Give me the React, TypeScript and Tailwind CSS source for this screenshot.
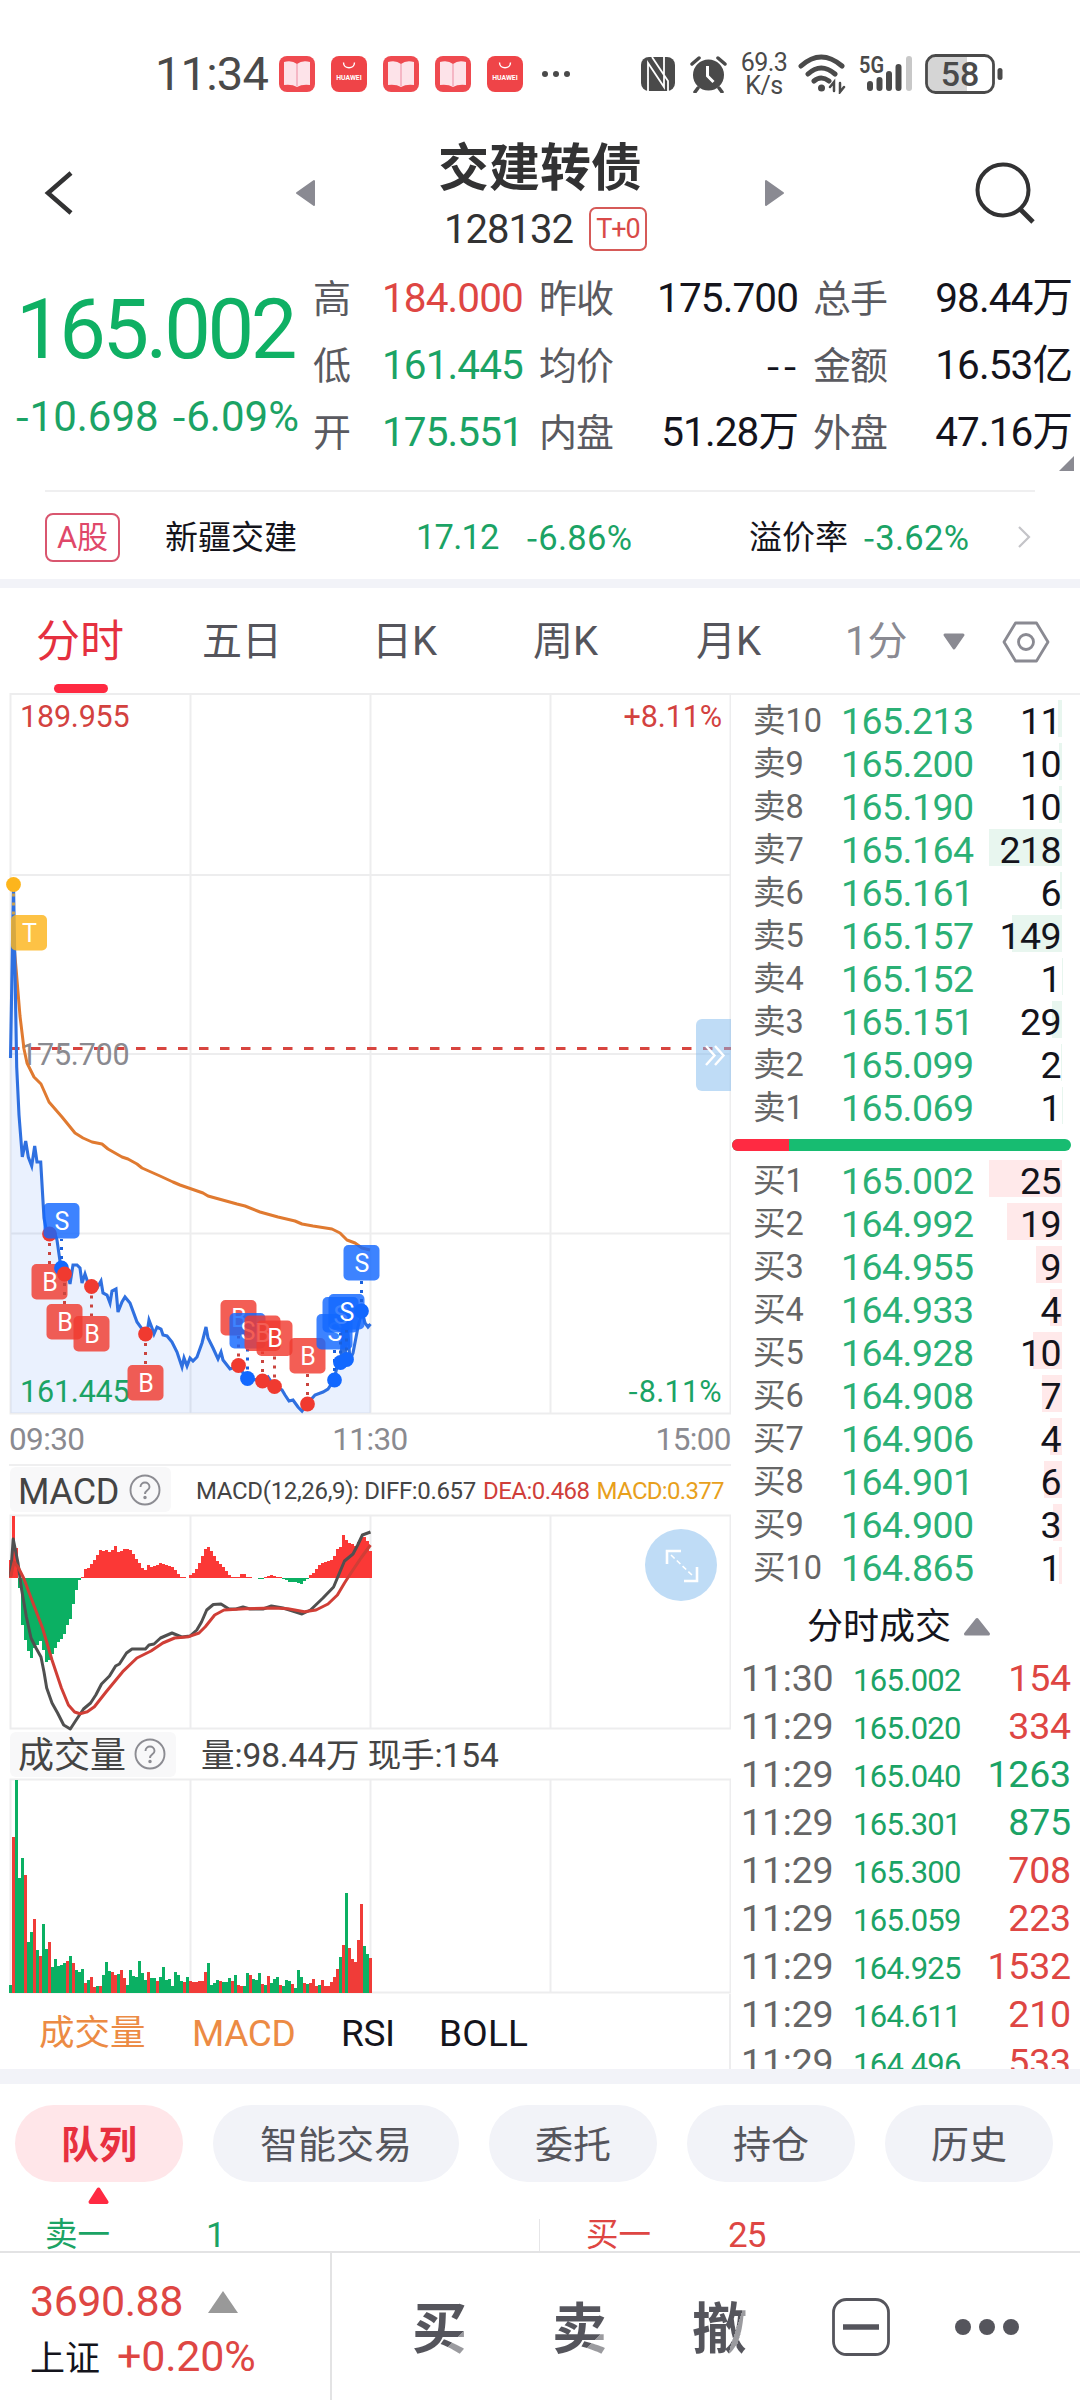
import React from 'react';

const asks = [
  ['卖10', '165.213', 11],
  ['卖9', '165.200', 10],
  ['卖8', '165.190', 10],
  ['卖7', '165.164', 218],
  ['卖6', '165.161', 6],
  ['卖5', '165.157', 149],
  ['卖4', '165.152', 1],
  ['卖3', '165.151', 29],
  ['卖2', '165.099', 2],
  ['卖1', '165.069', 1],
] as [string, string, number][];

const bids = [
  ['买1', '165.002', 25],
  ['买2', '164.992', 19],
  ['买3', '164.955', 9],
  ['买4', '164.933', 4],
  ['买5', '164.928', 10],
  ['买6', '164.908', 7],
  ['买7', '164.906', 4],
  ['买8', '164.901', 6],
  ['买9', '164.900', 3],
  ['买10', '164.865', 1],
] as [string, string, number][];

const trades = [
  ['11:30', '165.002', '154', 'r'],
  ['11:29', '165.020', '334', 'r'],
  ['11:29', '165.040', '1263', 'g'],
  ['11:29', '165.301', '875', 'g'],
  ['11:29', '165.300', '708', 'r'],
  ['11:29', '165.059', '223', 'r'],
  ['11:29', '164.925', '1532', 'r'],
  ['11:29', '164.611', '210', 'r'],
  ['11:29', '164.496', '533', 'r'],
];

// intraday price, one "x,y" pair per sample
const priceLine =
  '10.5,1058 13.5,884 16.7,1067 19,1115 22.3,1157 25.7,1141 28.3,1157 31.7,1166 34.7,1146 37,1162 40.7,1162 44,1218 47,1234 55,1234 57,1240 61,1268 65,1273 68,1275 70,1284 73,1265 77,1265 80,1268 82,1283 85,1274 88,1283 97,1288 101,1281 103,1293 107,1295 110,1303 112,1291 116,1289 118,1312 122,1302 125,1297 130,1303 137,1322 142,1329 147,1333 149,1320 152,1328 154,1334 157,1327 161,1329 163,1335 167,1336 172,1342 177,1352 182,1367 184,1358 187,1366 190,1358 193,1361 197,1357 202,1343 206,1327 208,1338 213,1348 218,1359 221,1352 223,1360 230,1369 238,1366 247,1378 262,1381 268,1377 274,1386 282,1390 285,1395 289,1401 293,1400 298,1407 302,1411 307,1404 315,1395 323,1392 328,1389 334,1380 337,1367 341,1362 343,1320 345,1360 347,1320 350,1360 353,1353 358,1327 362,1311 365,1323 368,1327 370.5,1324';

const avgLine =
  '13.5,940 16,968 20,1016 24,1049 27,1063 34,1077 41,1084 49,1102 62,1117 75,1133 83,1138 92,1142 102,1144 108,1149 122,1157 128,1159 137,1164 142,1168 160,1176 173,1182 180,1185 203,1193 208,1196 237,1204 245,1206 260,1212 278,1217 295,1221 302,1224 313,1226 332,1229 340,1233 347,1240 355,1243 362,1248 370,1250';

const diffLine =
  '10.5,1577 13.2,1539 18,1563 21.7,1590 26.4,1617 31,1638 36,1648 41,1657 44,1672 46.7,1688 52,1703 57.6,1713 63.7,1725 70.3,1729 75.5,1721 83.5,1709 90.6,1703 95.8,1695 101.5,1684 109.5,1676 115.6,1666 119.4,1664 126.5,1653 132,1649 145.4,1649 149,1645 154,1644 160.5,1638 172,1633 181.7,1637 190,1636 196.8,1630 201.5,1622 206.7,1610 213.3,1604.5 221,1604 229,1609 236,1609 243,1607 250,1609 263,1609 271.4,1606 283,1608 292.6,1611 302,1614 310.5,1610 323,1598 333.6,1587 340.7,1570 344.5,1561 353,1554 357.7,1545 362.4,1535 370.5,1532';

const deaLine =
  '10.5,1577 14,1562 18,1567 23.6,1578 30.7,1597 42.5,1628 52,1660 61.4,1688 68.4,1705 74.6,1712 80,1713.7 87.3,1711.7 94.4,1706.7 106,1692 122.7,1671.7 136.9,1658 151,1651 162.8,1643 174.6,1638 188.8,1636.7 199,1633 205.3,1626.7 214.7,1615 224,1610 245.4,1608.7 273.7,1608 287.9,1608.7 304.4,1611.7 316,1610 328,1604 337.4,1595 344.5,1583 351.6,1572 361,1558 370.5,1545';

const macd = [
  18, 62, 30, -10, -47, -62, -73, -80, -70, -67, -63, -72, -84, -82, -76, -70, -64, -61, -56, -47, -41, -26, -12, -2, 1, 9,
  10, 14, 18, 23, 28, 27, 28, 26, 28, 32, 26, 27, 29, 29, 28, 24, 19, 15, 10, 8, 13, 11, 12, 13, 15, 14, 13, 12, 11, 8, 4,
  1, 1, 0, 3, 5, 9, 15, 22, 29, 31, 27, 22, 17, 14, 11, 7, 3, 1, 1, 1, 4, 4, 1, 1, 0, 0, -1, -1, 1, 2, 3, 2, 1, 1, -1, -2,
  -4, -4, -4, -5, -6, -3, -1, 3, 5, 9, 13, 15, 16, 17, 18, 22, 29, 31, 43, 38, 35, 34, 32, 36, 40, 41, 37, 27,
];

const volume = [
  8, 156, 213, 115, 135, 118, 51, 61, 74, 43, 37, 69, 44, 51, 26, 34, 27, 28, 30, 32, 37, 30, 23, 21, 24, 10, 13, 16, 6, 7,
  7, 18, 31, 22, 21, 18, 19, 23, 15, 8, 23, 17, 16, 32, 20, 13, 21, 15, 15, 12, 16, 26, 13, 14, 7, 21, 18, 12, 11, 16, 12,
  11, 11, 12, 12, 21, 30, 8, 10, 13, 12, 11, 11, 15, 12, 18, 8, 7, 7, 20, 18, 14, 13, 20, 9, 8, 17, 10, 14, 16, 8, 7, 13,
  12, 9, 5, 23, 16, 10, 9, 10, 14, 7, 8, 13, 7, 7, 11, 16, 24, 36, 48, 100, 45, 34, 31, 53, 89, 47, 39, 35,
];

const upMinutes = new Set([
  1, 5, 8, 10, 13, 19, 21, 25, 27, 28, 30, 34, 35, 37, 38, 46, 49, 58, 60, 61, 62, 63, 64, 65, 70, 74, 76, 77, 80, 84, 86,
  90, 94, 98, 100, 101, 102, 104, 105, 106, 107, 108, 109, 111, 113, 114, 115, 116, 117, 120,
]);

// [side, x, dot y, label top]
const markers: [string, number, number, number][] = [
  ['B', 49.5, 1234, 1264],
  ['S', 61.5, 1268, 1203],
  ['B', 64.5, 1274, 1304],
  ['B', 91.5, 1286.5, 1316],
  ['B', 145.5, 1334, 1365],
  ['B', 238.5, 1365.5, 1300],
  ['S', 247.5, 1378.5, 1313],
  ['B', 262.5, 1381, 1315.5],
  ['B', 274.5, 1386.5, 1320.5],
  ['B', 307.5, 1404, 1338],
  ['S', 334.5, 1380, 1314],
  ['S', 340.5, 1362.5, 1297],
  ['S', 346.5, 1359.5, 1294],
  ['S', 361.5, 1311, 1245],
];

const markerFill: Record<string, string> = { B: '#f03a30', S: '#1268ff', T: '#fdb51c' };

const Marker = ({ side, x, dot, top, labelX }: { side: string; x: number; dot: number; top: number; labelX?: number }) => {
  const lx = labelX ?? x - 18;
  const fill = markerFill[side];
  return (
    <g>
      <line x1={x} x2={x} y1={dot} y2={top > dot ? top : top + 36} stroke={side === 'B' ? '#c9443e' : side === 'S' ? '#1a60dc' : '#c9a050'} strokeWidth="3" strokeDasharray="3 6" />
      <circle cx={x} cy={dot} r="7.4" fill={fill} />
      <rect x={lx} y={top} width="36" height="35.5" rx="5" fill={fill} fillOpacity="0.82" />
      <text x={lx + 18.5} y={top + 26.5} textAnchor="middle" fontSize="25" fill="#fff">{side}</text>
    </g>
  );
};

const Grid = ({ top, bottom }: { top: number; bottom: number }) => (
  <g stroke="#ededee" strokeWidth="2" fill="none">
    <rect x="10.5" y={top} width="720" height={bottom - top} />
    {[190.5, 370.5, 550.5].map((x) => <line key={x} x1={x} x2={x} y1={top} y2={bottom} />)}
  </g>
);

const PriceChart = () => (
  <svg className="block" width="731" height="722" viewBox="0 693 731 722">
    <Grid top={694} bottom={1413.5} />
    <g stroke="#ededee" strokeWidth="2">
      <line x1="10" x2="731" y1="875" y2="875" />
      <line x1="10" x2="731" y1="1054" y2="1054" />
      <line x1="10" x2="731" y1="1233.5" y2="1233.5" />
    </g>
    <polygon points={`10.5,1413 ${priceLine} 370.5,1413`} fill="#1668f0" fillOpacity="0.09" />
    <line x1="10" x2="731" y1="1048.5" y2="1048.5" stroke="#d8453f" strokeWidth="3.2" strokeDasharray="9.5 11.5" />
    <g fontSize="30.5">
      <text x="20" y="727" fill="#d3423f" letterSpacing="-0.2">189.955</text>
      <text x="722" y="727" fill="#d3423f" textAnchor="end" letterSpacing="-0.1">+8.11%</text>
      <text x="20" y="1065" fill="#8a8a90" letterSpacing="-0.2">175.700</text>
      <text x="20" y="1402" fill="#1ba365" letterSpacing="-0.2">161.445</text>
      <text x="722" y="1402" fill="#1ba365" textAnchor="end" letterSpacing="0.3">
        <tspan fontFamily="Noto Sans CJK SC">-</tspan>8.11%
      </text>
    </g>
    <polyline points={avgLine} fill="none" stroke="#e07a30" strokeWidth="3" strokeLinejoin="round" />
    <polyline points={priceLine} fill="none" stroke="#2f70e0" strokeWidth="3.1" />
    <Marker side="T" x={13.5} dot={884.5} top={915} labelX={11} />
    {markers.map(([side, x, dot, top], i) => <Marker key={i} side={side} x={x} dot={dot} top={top} />)}
    <path d="M731 1019H702a6 6 0 0 0-6 6v60a6 6 0 0 0 6 6h29z" fill="#7fb9ed" fillOpacity="0.5" />
    <path d="M706 1046l8.500 9.500-8.500 9.500M715 1046l8.500 9.500-8.500 9.500" fill="none" stroke="#fff" strokeWidth="2.4" />
  </svg>
);

const MacdChart = () => (
  <svg className="block" width="731" height="218" viewBox="0 1513 731 218">
    <Grid top={1515.5} bottom={1728.5} />
    {macd.map((v, i) => (
      <rect key={i} x={9 + i * 3} width="3.1" y={v > 0 ? 1578 - v : 1578} height={Math.abs(v)} fill={v > 0 ? '#fb3836' : '#0bb063'} shapeRendering="crispEdges" />
    ))}
    <polyline points={diffLine} fill="none" stroke="#505050" strokeWidth="3" strokeLinejoin="round" />
    <polyline points={deaLine} fill="none" stroke="#d03e36" strokeWidth="3" strokeLinejoin="round" />
    <circle cx="681" cy="1565" r="36" fill="#bfdcf6" />
    <path d="M667 1564v-13h14M684 1581h13v-14" fill="none" stroke="#fff" strokeWidth="2.6" />
    <path d="M671 1555l23 22" stroke="#fff" strokeWidth="1.6" strokeDasharray="5 3" />
  </svg>
);

const VolumeChart = () => (
  <svg className="block" width="731" height="217" viewBox="0 1777 731 217">
    <Grid top={1779.5} bottom={1992.5} />
    {volume.map((v, i) => (
      <rect key={i} x={9 + i * 3} width="3.05" y={1993 - v} height={v} fill={upMinutes.has(i) ? '#f03c38' : '#0bb063'} shapeRendering="crispEdges" />
    ))}
  </svg>
);

const Help = () => (
  <svg width="32" height="32" viewBox="0 0 32 32" fill="none" stroke="#8c8c92" strokeWidth="1.9">
    <circle cx="16" cy="16" r="14.500" />
    <path d="M11.500 13c0-6 9-6 9 0 0 3.500-4.500 3.200-4.500 7" />
    <circle cx="16" cy="23.500" r="0.800" fill="#8c8c92" />
  </svg>
);

const BookIcon = () => (
  <svg width="36" height="36" viewBox="0 0 36 36">
    <rect width="36" height="36" rx="8" fill="#ef4a50" />
    <path d="M5 6q8-2 13 2 5-4 13-2v23q-8-1-13 2-5-3-13-2z" fill="#fde3e9" />
    <path d="M18 8v22" stroke="#f2a8b8" strokeWidth="1.5" />
  </svg>
);

const StoreIcon = () => (
  <svg width="36" height="36" viewBox="0 0 36 36">
    <rect width="36" height="36" rx="8" fill="#ef4448" />
    <path d="M12.500 6.500c0 7 11 7 11 0" fill="none" stroke="#fff" strokeWidth="1.400" />
    <text x="18" y="23.500" textAnchor="middle" fontSize="6.800" fontWeight="700" fill="#fff">HUAWEI</text>
  </svg>
);

const StatusBar = () => (
  <div className="flex h-[110px] items-center pt-[37px] text-[#4a4a4a]">
    <div className="ml-[155px] w-[124px] text-[47px] tracking-[-0.8px]">11:34</div>
    <div className="flex gap-[16px]">
      <BookIcon />
      <StoreIcon />
      <BookIcon />
      <BookIcon />
      <StoreIcon />
    </div>
    <div className="ml-[19px] flex w-[99px] gap-[5px]">
      <i className="size-[6px] rounded-full bg-[#4a4a4a]" />
      <i className="size-[6px] rounded-full bg-[#4a4a4a]" />
      <i className="size-[6px] rounded-full bg-[#4a4a4a]" />
    </div>
    <svg width="34" height="36" viewBox="0 0 34 36">
      <rect y="1" width="34" height="34" rx="8" fill="#4a4a4a" />
      <path d="M7 35V7l16 24V1M11 1l16 24v10M7 8v27" fill="none" stroke="#fff" strokeWidth="1.800" />
    </svg>
    <svg className="ml-[15px]" width="37" height="38" viewBox="0 0 37 38">
      <circle cx="18.500" cy="20" r="15.500" fill="#4a4a4a" />
      <path d="M2 9l7-6M35 9l-7-6M8 33l-3 4M29 33l3 4" stroke="#4a4a4a" strokeWidth="3.500" strokeLinecap="round" />
      <path d="M17.500 11v10l6 6" fill="none" stroke="#fff" strokeWidth="3" />
    </svg>
    <div className="ml-[13px] w-[48px] text-center text-[25px] leading-[23px] tracking-[-0.5px]">
      69.3
      <br />
      K/s
    </div>
    <svg className="ml-[10px]" width="49" height="40" viewBox="0 0 49 40" fill="none" stroke="#4a4a4a" strokeWidth="5" strokeLinecap="round">
      <path d="M3 12q20-18 41 0M10 20q13-12 27 0M16 27q7-6 15 0" />
      <circle cx="23.500" cy="34" r="3.500" fill="#4a4a4a" stroke="none" />
      <path d="M36 37v-9l-4 5M42 29v9l4-5" strokeWidth="2.500" />
    </svg>
    <svg className="ml-[12px] overflow-visible" width="56" height="40" viewBox="0 0 56 40">
      <text x="0" y="19" fontSize="24" fontWeight="600" textLength="25" lengthAdjust="spacingAndGlyphs" fill="#4a4a4a">5G</text>
      <g strokeWidth="6" strokeLinecap="round" stroke="#4a4a4a">
        <path d="M11 30v4M20.500 26v8M30 20v14M39.500 13v21" />
        <path d="M50 5v29" stroke="#c8c8c8" />
      </g>
    </svg>
    <svg className="ml-[10px]" width="80" height="40" viewBox="0 0 80 40">
      <path d="M10 3h32v34H10q-7 0-7-7V10q0-7 7-7z" fill="#d5d5d5" />
      <rect x="1.500" y="1.500" width="67" height="37" rx="9" fill="none" stroke="#4a4a4a" strokeWidth="2.800" />
      <rect x="72.500" y="14" width="5" height="12" rx="2.500" fill="#4a4a4a" />
      <text x="35" y="32" textAnchor="middle" fontSize="34" fontWeight="500" fill="#4a4a4a">58</text>
    </svg>
  </div>
);

const Header = () => (
  <div className="flex h-[146px] items-center text-[#323233]">
    <svg className="ml-[43px] mt-[20px]" width="32" height="48" viewBox="0 0 32 48">
      <path d="M28 4L5 24l23 20" fill="none" stroke="#323233" strokeWidth="4.500" />
    </svg>
    <svg className="ml-[219px] mt-[20px]" width="22" height="28" viewBox="0 0 22 28">
      <path d="M20 2v24L3 14z" fill="#8a8a92" stroke="#8a8a92" strokeWidth="2" strokeLinejoin="round" />
    </svg>
    <div className="flex w-[448px] flex-col items-center pt-[24px]">
      <div className="h-[68px] text-[51px] font-bold leading-[60px]">交建转债</div>
      <div className="flex h-[44px] items-center gap-[16px] pl-[11px]">
        <span className="pt-[2px] text-[40px] tracking-[-1px]">128132</span>
        <span className="flex h-[44px] w-[58px] items-center justify-center rounded-[7px] border-2 border-[#d65a58] text-[27px] tracking-[-1px] text-[#d94a48]">T+0</span>
      </div>
    </div>
    <svg className="mt-[20px]" width="22" height="28" viewBox="0 0 22 28">
      <path d="M2 2v24l17-12z" fill="#8a8a92" stroke="#8a8a92" strokeWidth="2" strokeLinejoin="round" />
    </svg>
    <svg className="ml-[188px] mt-[20px]" width="64" height="64" viewBox="0 0 64 64" fill="none" stroke="#323233" strokeWidth="4">
      <circle cx="29" cy="29" r="25.500" />
      <path d="M46 48l13 13" strokeWidth="4.800" />
    </svg>
  </div>
);

// the hyphen of the CJK face is wide enough to read as a minus sign
const Negative = ({ value }: { value: string }) => (
  <>
    <span className="font-['Noto_Sans_CJK_SC']">-</span>
    {value}
  </>
);

const stats = [
  ['高', '184.000', 'text-[#de4643]', '昨收', '175.700', '总手', '98.44万'],
  ['低', '161.445', 'text-[#1ba365]', '均价', '--', '金额', '16.53亿'],
  ['开', '175.551', 'text-[#1ba365]', '内盘', '51.28万', '外盘', '47.16万'],
];

const Quote = () => (
  <div className="relative flex h-[234px]">
    <div className="w-[313px] text-[#0fb064]">
      <div className="mt-[31px] h-[85px] pl-[16px] text-[83px] leading-[85px] tracking-[-3.4px]">165.002</div>
      <div className="mt-[20px] flex gap-[13px] whitespace-nowrap pl-[15px] text-[42px] leading-[42px] text-[#1ba365]">
        <span><Negative value="10.698" /></span>
        <span><Negative value="6.09%" /></span>
      </div>
    </div>
    <div className="flex-1 pt-[9px]">
      {stats.map(([l1, v1, tone, l2, v2, l3, v3]) => (
        <div key={l1} className="flex h-[67px] items-center text-[40.5px] tracking-[-0.9px]">
          <span className="w-[69px] text-[38px] text-[#5a5a60]">{l1}</span>
          <span className={`w-[157px] ${tone}`}>{v1}</span>
          <span className="w-[78px] text-[38px] text-[#5a5a60]">{l2}</span>
          <span className={v2 === '--' ? "w-[183px] pb-[5px] text-right font-['Noto_Sans_CJK_SC'] tracking-[3px] text-[#14141c]" : 'w-[181px] text-right text-[#14141c]'}>{v2}</span>
          <span className={v2 === '--' ? 'ml-[13px] w-[78px] text-[38px] text-[#5a5a60]' : 'ml-[15px] w-[78px] text-[38px] text-[#5a5a60]'}>{l3}</span>
          <span className="w-[181px] text-right text-[#14141c]">{v3}</span>
        </div>
      ))}
    </div>
    <svg className="absolute bottom-[19px] right-[6px]" width="15" height="15" viewBox="0 0 15 15">
      <path d="M15 0v15H0z" fill="#8a8a92" />
    </svg>
  </div>
);

const LinkedStock = () => (
  <div className="mx-[45px] flex h-[89px] items-center border-t-2 border-[#efeff0] pt-[3px] text-[34.5px] text-[#1ba365]">
    <span className="flex h-[49px] w-[75px] items-center justify-center rounded-[8px] border-2 border-[#d9566f] text-[31px] text-[#e0486a]">A股</span>
    <span className="ml-[45px] w-[251px] text-[33px] text-[#14141c]">新疆交建</span>
    <span className="w-[110px] tracking-[-0.8px]">17.12</span>
    <span className="w-[223px] tracking-[0.3px]"><Negative value="6.86%" /></span>
    <span className="w-[114px] text-[33px] text-[#14141c]">溢价率</span>
    <span className="w-[153px] tracking-[0.3px]"><Negative value="3.62%" /></span>
    <svg width="16" height="24" viewBox="0 0 16 24">
      <path d="M3 2l10 10L3 22" fill="none" stroke="#c4c4c8" strokeWidth="2.200" />
    </svg>
  </div>
);

const PeriodTabs = () => (
  <div className="relative flex h-[105px] items-center pt-[2px] text-[40px] text-[#55555c]">
    <span className="ml-[36px] w-[166px] text-[44px] text-[#e5303f]">分时</span>
    <span className="w-[170px]">五日</span>
    <span className="w-[161px]">日K</span>
    <span className="w-[163px]">周K</span>
    <span className="w-[149px]">月K</span>
    <span className="w-[97px] text-[#8a8a92]">1分</span>
    <svg width="24" height="18" viewBox="0 0 24 18">
      <path d="M3 2h18l-9 13z" fill="#8a8a92" stroke="#8a8a92" strokeWidth="3" strokeLinejoin="round" />
    </svg>
    <svg className="ml-[36px]" width="48" height="44" viewBox="0 0 48 44" fill="none" stroke="#8a8a92" strokeWidth="2.800">
      <path d="M13.500 3h21L46 22 34.500 41h-21L2 22z" strokeLinejoin="round" />
      <circle cx="24" cy="22" r="7.500" />
    </svg>
    <i className="absolute bottom-0 left-[54px] h-[9px] w-[54px] rounded-full bg-[#ff2a42]" />
  </div>
);

const DepthRow = ({ row, max, tone }: { row: [string, string, number]; max: number; tone: string }) => (
  <div className="flex h-[43px] items-center pl-[22px] text-[37.5px] tracking-[-0.55px]">
    <span className="w-[88px] pt-[6px] text-[32.5px] tracking-normal text-[#666]">{row[0]}</span>
    <span className="w-[148px] pt-[6px] text-[#2bb075]">{row[1]}</span>
    <span className="relative flex h-[37px] w-[73px] items-center justify-end pr-[1px] text-[#14141c]">
      <i className={`absolute right-0 top-0 h-full ${tone}`} style={{ width: `${(row[2] / max) * 100}%` }} />
      <span className="relative pt-[6px]">{row[2]}</span>
    </span>
  </div>
);

const OrderBook = () => (
  <div className="h-[1376px] w-[349px] overflow-hidden border-t-2 border-[#efeff0] pt-[2px]">
    {asks.map((row) => <DepthRow key={row[0]} row={row} max={218} tone="bg-[#e8f6ef]" />)}
    <div className="ml-[1px] mt-[12px] flex h-[12px] w-[339px] overflow-hidden rounded-full bg-[#17bc71]">
      <i className="w-[57px] bg-[#ff2a42]" />
    </div>
    <div className="mt-[6px]">
      {bids.map((row) => <DepthRow key={row[0]} row={row} max={25} tone="bg-[#ffe9ea]" />)}
    </div>
    <div className="flex h-[67px] items-center pl-[76px] pt-[12px] text-[36px] text-[#14141c]">
      分时成交
      <svg className="ml-[12px]" width="28" height="20" viewBox="0 0 28 20">
        <path d="M14 2.500L25.500 17h-23z" fill="#8a8a92" stroke="#8a8a92" strokeWidth="3" strokeLinejoin="round" />
      </svg>
    </div>
    {trades.map(([time, price, qty, side], i) => (
      <div key={i} className="flex h-[48px] items-baseline pl-[10px] text-[37.5px] leading-[48px] tracking-[-0.2px]">
        <span className="w-[112px] text-[#666]">{time}</span>
        <span className="w-[110px] text-[31px] tracking-[-0.7px] text-[#1ba365]">{price}</span>
        <span className={`w-[108px] text-right ${side === 'r' ? 'text-[#de4643]' : 'text-[#1ba365]'}`}>{qty}</span>
      </div>
    ))}
  </div>
);

const ChartColumn = () => (
  <div className="w-[731px]">
    <PriceChart />
    <div className="ml-[9px] flex h-[51px] items-center justify-between border-b-2 border-[#efeff0] text-[31.5px] tracking-[-0.6px] text-[#8a8a90]">
      <span>09:30</span>
      <span>11:30</span>
      <span>15:00</span>
    </div>
    <div className="ml-[10px] flex h-[47px] items-center whitespace-nowrap text-[24px] tracking-[-0.5px]">
      <div className="flex h-[45px] w-[161px] items-center gap-[10px] rounded-[6px] bg-[#f8f8f9] pl-[8px] text-[36px] text-[#444]">
        <span className="w-[101px] pt-[4px] tracking-[-0.2px]">MACD</span>
        <Help />
      </div>
      <span className="ml-[25px] pt-[2px] tracking-[-0.33px] text-[#444]">MACD(12,26,9): DIFF:0.657</span>
      <span className="ml-[7px] pt-[2px] text-[#d03e3a]">DEA:0.468</span>
      <span className="ml-[7px] pt-[2px] tracking-[-0.7px] text-[#e8a01c]">MACD:0.377</span>
    </div>
    <MacdChart />
    <div className="ml-[10px] flex h-[46px] items-center whitespace-nowrap text-[#444]">
      <div className="flex h-[45px] w-[166px] items-center gap-[9px] rounded-[6px] bg-[#f8f8f9] pl-[8px] text-[36px]">
        <span className="w-[107px] pt-[3px]">成交量</span>
        <Help />
      </div>
      <span className="ml-[25px] pt-[3px] text-[33.5px] tracking-[-0.1px]">量:98.44万 现手:154</span>
    </div>
    <VolumeChart />
    <div className="flex h-[75px] items-center border-r-2 border-[#ededee] pt-[3px] text-[37px] tracking-[-0.4px] text-[#14141c]">
      <span className="ml-[39px] w-[153px] pt-[2px] text-[35.5px] tracking-normal text-[#ec8b44]">成交量</span>
      <span className="w-[149px] text-[#ec8b44]">MACD</span>
      <span className="w-[98px]">RSI</span>
      <span className="tracking-[0.2px]">BOLL</span>
    </div>
  </div>
);

const QueueTabs = () => (
  <div className="h-[167px] overflow-hidden">
    <div className="ml-[15px] mt-[21px] flex gap-[30px] text-[38px] text-[#55555c]">
      <span className="flex h-[77px] w-[168px] items-center justify-center rounded-full bg-[#ffe6e9] pt-[2px] font-bold text-[#e8303f]">队列</span>
      <span className="flex h-[77px] w-[246px] items-center justify-center rounded-full bg-[#f2f3f8] pt-[2px]">智能交易</span>
      {['委托', '持仓', '历史'].map((label) => (
        <span key={label} className="flex h-[77px] w-[168px] items-center justify-center rounded-full bg-[#f2f3f8] pt-[2px]">{label}</span>
      ))}
    </div>
    <svg className="ml-[87px] mt-[5px]" width="23" height="18" viewBox="0 0 23 18">
      <path d="M11.500 2.500l8 12.500h-16z" fill="#ff2a42" stroke="#ff2a42" strokeWidth="4" strokeLinejoin="round" />
    </svg>
    <div className="mt-[14px] flex h-[32px] items-center text-[35px] text-[#1ba365]">
      <span className="ml-[45px] w-[161px] text-[32.5px]">卖一</span>
      <span className="w-[333px]">1</span>
      <i className="h-full w-px bg-[#e6e6e8]" />
      <span className="ml-[46px] w-[142px] text-[32.5px] text-[#de4643]">买一</span>
      <span className="tracking-[-1px] text-[#de4643]">25</span>
    </div>
  </div>
);

const BottomBar = () => (
  <div className="flex h-[149px] border-t-2 border-[#e3e3e4] text-[#de4643]">
    <div className="w-[332px] border-r-2 border-[#e3e3e4] pl-[30px]">
      <div className="mt-[26px] flex h-[45px] items-center text-[43px] tracking-[-0.5px]">
        3690.88
        <svg className="ml-[25px]" width="30" height="22" viewBox="0 0 30 22">
          <path d="M15 0l15 22H0z" fill="#999" />
        </svg>
      </div>
      <div className="mt-[9px] flex h-[46px] items-baseline text-[43px] leading-[46px] tracking-[-0.2px]">
        <span className="mr-[17px] text-[35px] tracking-normal text-[#14141c]">上证</span>
        +0.20%
      </div>
    </div>
    <div className="flex flex-1 items-center pl-[80px] text-[55px] font-bold leading-[70px]">
      <span className="w-[140px] pt-[4px]">
        <span className="bg-[linear-gradient(135deg,#55555c_72%,#9b9b9f_72%)] bg-clip-text text-transparent">买</span>
      </span>
      <span className="w-[140px] pt-[4px]">
        <span className="bg-[linear-gradient(135deg,#55555c_72%,#9b9b9f_72%)] bg-clip-text text-transparent">卖</span>
      </span>
      <span className="w-[140px] pt-[4px]">
        <span className="bg-[linear-gradient(108deg,#55555c_72%,#9b9b9f_72%,#9b9b9f_80%,#55555c_80%)] bg-clip-text text-transparent">撤</span>
      </span>
      <svg width="58" height="58" viewBox="0 0 58 58">
        <rect x="1.500" y="1.500" width="55" height="55" rx="13" fill="none" stroke="#55555c" strokeWidth="2.800" />
        <path d="M11 29h36" stroke="#55555c" strokeWidth="5.500" />
      </svg>
      <div className="ml-[65px] flex gap-[8px]">
        <i className="size-[16px] rounded-full bg-[#55555c]" />
        <i className="size-[16px] rounded-full bg-[#55555c]" />
        <i className="size-[16px] rounded-full bg-[#55555c]" />
      </div>
    </div>
  </div>
);

export default function App() {
  return (
    <div className="flex h-[2400px] w-[1080px] flex-col overflow-hidden bg-white font-[Roboto,'Noto_Sans_CJK_SC',sans-serif] leading-none">
      <StatusBar />
      <Header />
      <Quote />
      <LinkedStock />
      <div className="h-[9px] bg-[#f2f3f8]" />
      <PeriodTabs />
      <div className="flex h-[1376px]">
        <ChartColumn />
        <OrderBook />
      </div>
      <div className="h-[15px] bg-[#f2f3f8]" />
      <QueueTabs />
      <BottomBar />
    </div>
  );
}
